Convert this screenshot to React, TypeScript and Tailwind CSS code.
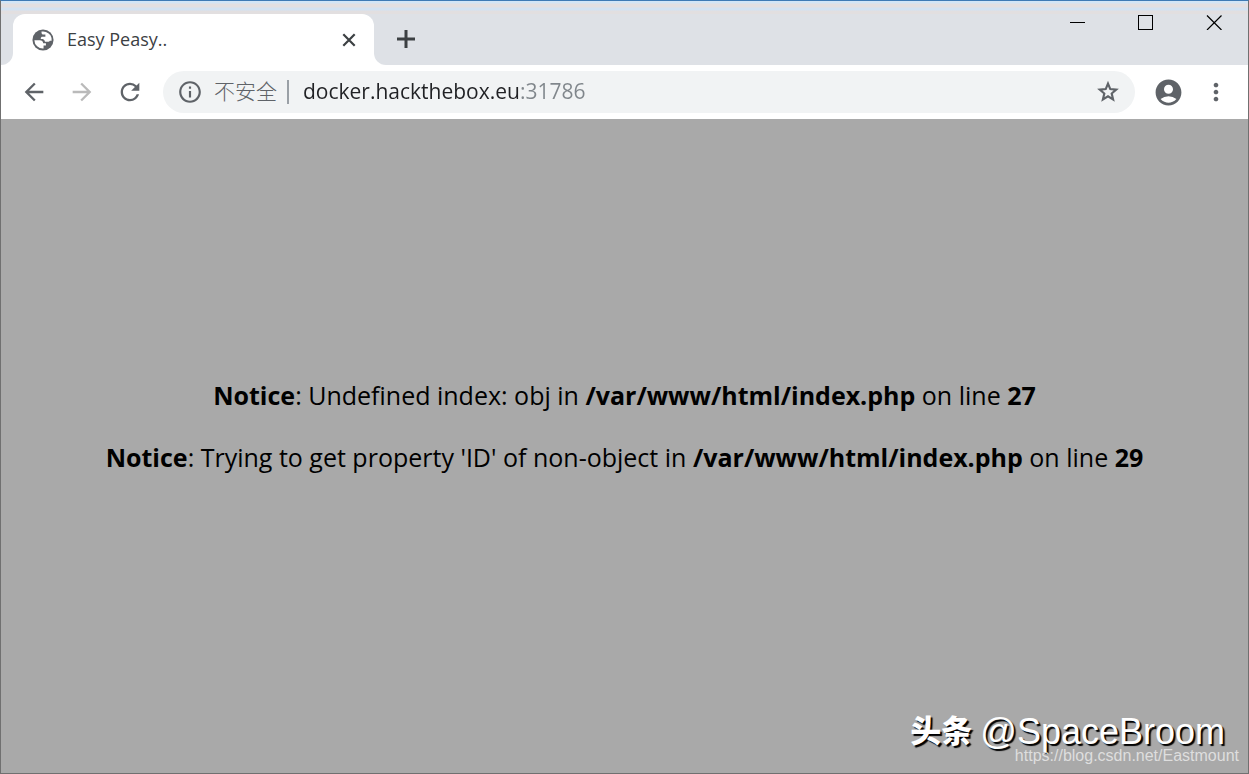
import { MdArrowBack, MdArrowForward, MdRefresh, MdInfoOutline, MdAccountCircle, MdMoreVert } from "react-icons/md";

function GlobeIcon() {
  return (
    <svg viewBox="0 0 24 24" className="size-[22px] shrink-0" aria-hidden="true">
      <circle cx="12" cy="12" r="11.5" fill="#5f6368" />
      <path
        fill="#fff"
        d="M2.6 12.2h5.8c2.4 0 3.6 1.2 3.8 3.3h3v2.4h-2.6v3.4A9.3 9.3 0 0 1 2.6 12.2ZM10.4 2.8v.9c0 1.9 1 2.4 2.6 2.4h1.6v2.3h-3.2c-1.2 0-1.8.7-1.8 1.8v.6c1 .1 2.6 0 3.4.8.8.7 1 1.6 1.2 2.4h3.2c1 0 1.6-.5 2.1-1.2h1.9A9.4 9.4 0 0 0 15.2 3.2 9.3 9.3 0 0 0 10.4 2.8Z"
      />
    </svg>
  );
}

function CloseIcon() {
  return (
    <svg viewBox="0 0 20 20" className="size-5" fill="none" stroke="currentColor" strokeWidth="2.2" aria-hidden="true">
      <path d="M4.3 4.3l11.4 11.4M15.7 4.3L4.3 15.7" />
    </svg>
  );
}

function PlusIcon() {
  return (
    <svg viewBox="0 0 28 28" className="size-7" fill="none" stroke="currentColor" strokeWidth="3" aria-hidden="true">
      <path d="M14 5v18M5 14h18" />
    </svg>
  );
}

function StarIcon() {
  return (
    <svg viewBox="0 0 24 24" className="size-[26px]" fill="none" stroke="currentColor" strokeWidth="2" aria-hidden="true">
      <path d="M12 4.2l2.1 5.100 5.500.5-4.200 3.600 1.300 5.400L12 15.900l-4.700 2.900 1.300-5.400-4.200-3.600 5.500-.5z" />
    </svg>
  );
}

function WindowControls() {
  return (
    <div className="flex h-4 text-black">
      <button aria-label="Minimize" className="flex w-17 items-center justify-center">
        <svg viewBox="0 0 16 16" className="size-4" fill="none" stroke="currentColor" shapeRendering="crispEdges">
          <path d="M0 8.5h15" />
        </svg>
      </button>
      <button aria-label="Maximize" className="flex w-17 items-center justify-center">
        <svg viewBox="0 0 16 16" className="size-4" fill="none" stroke="currentColor" shapeRendering="crispEdges">
          <rect x="0.5" y="1.5" width="14" height="14" />
        </svg>
      </button>
      <button aria-label="Close" className="flex w-17 items-center justify-center">
        <svg viewBox="0 0 16 16" className="size-4" fill="none" stroke="currentColor" strokeWidth="1.2">
          <path d="M1 1.500l14.500 14.500M15.500 1.500L1 16" />
        </svg>
      </button>
    </div>
  );
}

function TabStrip() {
  return (
    <header className="shrink-0">
      <div className="h-[13px] bg-[linear-gradient(#d3e5f6_2px,#e3dfe1_3px,#e3dfe1_6px,#d3e2f2_7px,#d3e2f2_9px,#e2dfe0_10px)]" />
      <div className="flex h-[51px] bg-white">
        <div className="w-3 rounded-br-xl bg-[#dee1e6]" />
        <div className="flex w-[361px] bg-[#dee1e6]">
          <div className="flex flex-1 items-center rounded-t-xl bg-white pr-[13px] pl-[19px]">
            <GlobeIcon />
            <a href="#page" className="ml-[13px] flex-1 text-[18px] text-[#3c4043]">
              Easy Peasy..
            </a>
            <button aria-label="Close tab" className="flex size-6 items-center justify-center text-[#3c4043]">
              <CloseIcon />
            </button>
          </div>
        </div>
        <div className="flex flex-1 items-start justify-between rounded-bl-xl bg-[#dee1e6]">
          <button aria-label="New tab" className="ml-4 flex h-[50px] w-8 items-center justify-center text-[#3c4043]">
            <PlusIcon />
          </button>
          <WindowControls />
        </div>
      </div>
    </header>
  );
}

function Toolbar() {
  return (
    <nav className="flex h-[54px] shrink-0 items-center bg-white pl-[19px] text-[#5f6368]">
      <button aria-label="Back">
        <MdArrowBack className="size-7" />
      </button>
      <button aria-label="Forward" className="ml-5 text-[#bababa]">
        <MdArrowForward className="size-7" />
      </button>
      <button aria-label="Reload" className="ml-5">
        <MdRefresh className="size-7" />
      </button>
      <div className="ml-[19px] flex h-[42px] flex-1 items-center rounded-full bg-[#f1f3f4] px-[14px]">
        <button className="flex items-center gap-[11px] text-[21px] font-light whitespace-nowrap">
          <MdInfoOutline className="size-[26px]" />
          不安全
        </button>
        <div className="ml-[10px] h-6 w-[2px] bg-[#9aa0a6]" />
        <input
          aria-label="Address"
          defaultValue="docker.hackthebox.eu:31786"
          className="ml-[14px] min-w-0 flex-1 bg-[linear-gradient(to_right,#202124_216px,#80868b_216px)] bg-clip-text text-[21px] text-transparent outline-none"
        />
        <button aria-label="Bookmark">
          <StarIcon />
        </button>
      </div>
      <button aria-label="Profile" className="ml-[18px]">
        <MdAccountCircle className="size-[31px]" />
      </button>
      <button aria-label="Menu" className="mr-[18px] ml-[18px]">
        <MdMoreVert className="size-7" />
      </button>
    </nav>
  );
}

export default function App() {
  return (
    <div className="flex min-h-screen flex-col border border-t-[#3f7ab5] border-r-[#707070] border-b-[#707070] border-l-[#707070] bg-[#a9a9a9] font-['Open_Sans','Noto_Sans_CJK_SC',sans-serif]">
      <TabStrip />
      <Toolbar />
      <main id="page" className="flex flex-1 flex-col items-center justify-center pb-10 text-center text-[25px] leading-[31px] text-black">
        <p>
          <b>Notice</b>: Undefined index: obj in <b>/var/www/html/index.php</b> on line <b>27</b>
        </p>
        <p className="mt-[31px]">
          <b>Notice</b>: Trying to get property 'ID' of non-object in <b>/var/www/html/index.php</b> on line <b>29</b>
        </p>
      </main>
      <footer className="absolute right-[10px] bottom-2 flex flex-col items-end font-['Liberation_Sans','Noto_Sans_CJK_SC',sans-serif] text-white">
        <div className="mr-[14px] flex items-center gap-2 text-[36px] leading-10 [text-shadow:2px_2px_1px_#000]">
          <span className="text-[31px] font-black">头条</span>
          <span>@SpaceBroom</span>
        </div>
        <a href="https://blog.csdn.net/Eastmount" className="-mt-[6px] text-base leading-5 text-[#dedede]">
          https://blog.csdn.net/Eastmount
        </a>
      </footer>
    </div>
  );
}
